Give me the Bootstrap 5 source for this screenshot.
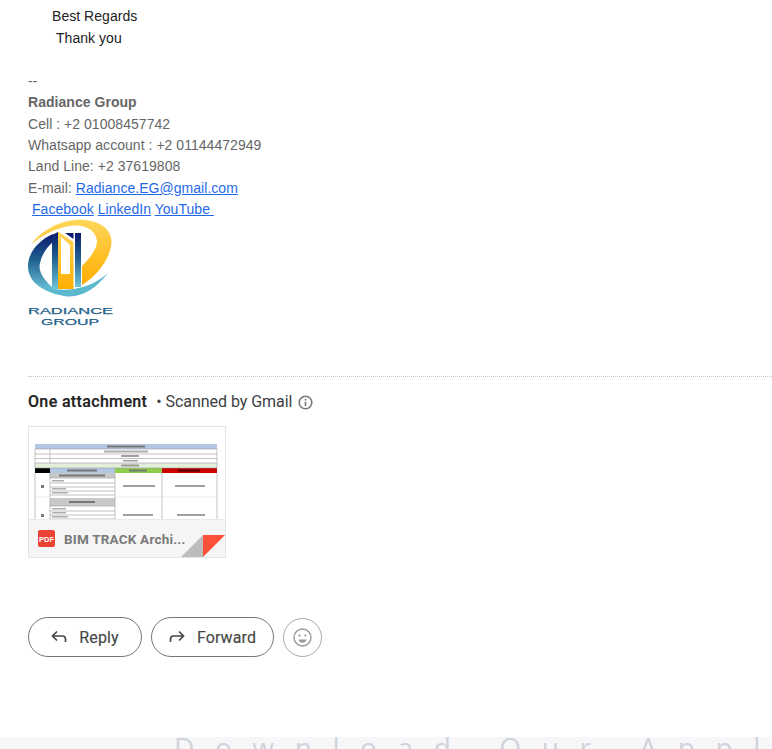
<!DOCTYPE html>
<html lang="en">
<head>
    <meta charset="UTF-8">
    <meta name="viewport" content="width=device-width, initial-scale=1.0">
    <title>Message</title>
    <link rel="stylesheet" href="https://cdn.jsdelivr.net/npm/bootstrap@5.3.0/dist/css/bootstrap.min.css">
    <style>
        html, body { height: 749px; overflow: hidden; background: #fff; }
        .mail-wrap { padding: 6.500px 0 0 28px; }
        .mail-body { font: 14px/21.4px "Liberation Sans", Arial, sans-serif; color: #222; letter-spacing: .04px; }
        .greet-a { padding-left: 24px; margin-top: -1px; margin-bottom: 1px; }
        .greet-b { padding-left: 28px; }
        .sig { color: #666; margin-top: 21.4px; }
        .sig a { color: #1f6ae8; }
        .sig-links { padding-left: 4px; }
        .logo-svg { display: block; width: 86px; height: 110px; margin-top: -1.500px; margin-bottom: -2px; }
        .att-rule { border-top: 1px dotted #c4c4c4; margin-top: 49px; }
        .att-head { font: 16px/20px Roboto, sans-serif; color: #222; margin-top: 15px; height: 20px; }
        .att-head b { font-weight: 500; letter-spacing: .35px; -webkit-text-stroke: .2px #222; }
        .att-scan { color: #3c4043; margin-left: 9px; margin-right: 6px; letter-spacing: -.05px; }
        .att-tile { width: 198px; height: 132px; border: 1px solid #e4e4e4; margin-top: 14px; position: relative; overflow: hidden; background: #fff; }
        .att-tile svg.thumb { display: block; width: 196px; height: 130px; filter: blur(.45px); }
        .att-foot { position: absolute; left: 0; right: 0; bottom: 0; height: 38px; background: #f5f5f5; border-top: 1px solid #e8e8e8; padding-left: 9px; gap: 9px; }
        .att-name { font: 700 13.5px Roboto, sans-serif; color: #7a7a7a; letter-spacing: .2px; white-space: nowrap; }
        .pdf-ico { width: 17px; height: 17px; flex: none; }
        .att-fold { position: absolute; right: 0; bottom: 0; width: 44px; height: 22px; }
        .act-row { margin-top: 59px; gap: 9px; }
        .act-btn { height: 40px; border: 1px solid #747775; border-radius: 20px; background: #fff; font: 400 16px Roboto, sans-serif; color: #444746; letter-spacing: .1px; padding: 0 2px 0 0; gap: 10px; -webkit-text-stroke: .15px #444746; }
        .act-reply { width: 114px; }
        .act-fwd { width: 123px; }
        .act-emoji { width: 39px; height: 39px; border-color: #aaa; border-radius: 50%; padding: 0; }
        .dl-band { position: absolute; left: 0; right: 0; top: 737px; height: 12px; background: #f7f7f9; overflow: hidden; }
        .dl-text { position: absolute; top: -8px; left: 174px; white-space: nowrap; font: 28px/36px "Open Sans", sans-serif; letter-spacing: 20.600px; color: #cfd3db; }
    </style>
</head>
<body>
    <div class="mail-wrap">
        <div class="mail-body">
            <div class="greet-a">Best Regards</div>
            <div class="greet-b">Thank you</div>
            <div class="sig">
                <div>--</div>
                <div class="fw-bold">Radiance Group</div>
                <div>Cell : +2 01008457742</div>
                <div>Whatsapp account : +2 01144472949</div>
                <div>Land Line: +2 37619808</div>
                <div>E-mail: <a href="#">Radiance.EG@gmail.com</a></div>
                <div class="sig-links"><a href="#">Facebook</a> <a href="#">LinkedIn</a> <a href="#">YouTube&nbsp;</a></div>
            </div>
        </div>

        <svg class="logo-svg" viewBox="0 0 86 110">
            <defs>
                <linearGradient id="gBlue" x1="0" y1="0" x2="0" y2="1">
                    <stop offset="0" stop-color="#0b1a6e"/>
                    <stop offset=".45" stop-color="#1f5f90"/>
                    <stop offset="1" stop-color="#6ec4d8"/>
                </linearGradient>
                <linearGradient id="gGold" x1="0" y1="0" x2="0" y2="1">
                    <stop offset="0" stop-color="#ffd65a"/>
                    <stop offset="1" stop-color="#ffae00"/>
                </linearGradient>
            </defs>
            <path d="M3.500 25C10 15 28 2 49 .7C70 0 83 9 83.500 22C84 36 71 56 54 66L54 47C62 39 69 30 69 22C68 11 57 6 47 6.500C33 7 17 14 3.500 25Z" fill="url(#gGold)"/>
            <path d="M25 15C9 22 0 35 0 47C0 60 10 70 24 72L24 68C15 60 10 52 12 44C14 35 19 28 25 23Z" fill="url(#gBlue)"/>
            <path d="M6 62C12 70 24 75 36 77C52 80 68 70 80 54C70 63 58 68 46 70C32 72 17 70 6 62Z" fill="#5cb9cd"/>
            <path d="M24 16L30 13L30 70L24 70Z" fill="url(#gBlue)"/>
            <path d="M30 12.500L45.500 23L45.500 70L30 70Z" fill="url(#gGold)"/>
            <path d="M33 18L42 26V55H33Z" fill="#fff"/>
            <path d="M37 14H45.500V20Z" fill="#0b1a6e"/>
            <path d="M47 14H53V68H47Z" fill="url(#gBlue)"/>
            <text x="0" y="95" textLength="85" lengthAdjust="spacingAndGlyphs" font-family="Liberation Sans, sans-serif" font-size="9.500" stroke="#1f5f8b" stroke-width=".25" fill="#1f5f8b">RADIANCE</text>
            <text x="13" y="106" textLength="58" lengthAdjust="spacingAndGlyphs" font-family="Liberation Sans, sans-serif" font-size="9.500" stroke="#1f5f8b" stroke-width=".25" fill="#1f5f8b">GROUP</text>
        </svg>

        <div class="att-rule"></div>
        <div class="att-head d-flex align-items-center">
            <b>One attachment</b>
            <span class="att-scan">• Scanned by Gmail</span>
            <svg width="15" height="15" viewBox="0 0 15 15" fill="none" stroke="#777" stroke-width="1.600">
                <circle cx="7.500" cy="7.500" r="6.300"/>
                <path d="M7.500 6.800V11M7.500 4V5.400"/>
            </svg>
        </div>

        <div class="att-tile">
            <svg class="thumb" viewBox="0 0 196 130">
                <rect x="6" y="17" width="182" height="5" fill="#b3c6e4"/>
                <rect x="6" y="36" width="182" height="5" fill="#e3efd9"/>
                <rect x="6" y="41" width="15" height="5" fill="#000"/>
                <rect x="21" y="41" width="65" height="5" fill="#b3c6e4"/>
                <rect x="86" y="41" width="47" height="5" fill="#8fce4a"/>
                <rect x="133" y="41" width="55" height="5" fill="#c80000"/>
                <rect x="21" y="46" width="65" height="5" fill="#c9c9c9"/>
                <rect x="21" y="71" width="65" height="8" fill="#c9c9c9"/>
                <g fill="none" stroke="#9a9a9a" stroke-width=".6">
                    <rect x="6" y="22" width="182" height="19"/>
                    <path d="M21 22V36M6 27H188M6 31.500H188M6 36H188"/>
                    <path d="M6 46V102M21 46V102M86 46V102M133 46V102M188 46V102"/>
                    <path d="M21 51H86M21 56H86M21 60H86M21 64H86M21 68H86M21 79H86M21 84H86M21 88H86M21 92H86M21 96H86"/>
                </g>
                <path d="M6 70H21M86 70H188" stroke="#dedede" stroke-width=".6"/>
                <g fill="#777">
                    <rect x="78" y="18.500" width="38" height="2"/>
                    <rect x="75" y="23.500" width="44" height="2" opacity=".6"/>
                    <rect x="92" y="28" width="18" height="2" opacity=".7"/>
                    <rect x="94" y="33" width="15" height="1.500" opacity=".7"/>
                    <rect x="92" y="37.500" width="18" height="2" opacity=".7"/>
                    <rect x="38" y="42.500" width="30" height="2"/>
                    <rect x="100" y="42.500" width="18" height="2"/>
                    <rect x="149" y="42.500" width="22" height="2" fill="#500"/>
                    <rect x="30" y="47.500" width="46" height="2"/>
                    <rect x="40" y="74" width="26" height="2"/>
                    <rect x="12" y="58" width="3" height="3"/>
                    <rect x="12" y="87" width="3" height="3"/>
                    <rect x="94" y="58" width="32" height="2" opacity=".7"/>
                    <rect x="146" y="58" width="30" height="2" opacity=".7"/>
                    <rect x="94" y="87" width="30" height="2" opacity=".7"/>
                    <rect x="148" y="87" width="28" height="2" opacity=".7"/>
                    <rect x="23" y="53" width="12" height="1.500" opacity=".6"/>
                    <rect x="23" y="61" width="14" height="1.500" opacity=".6"/>
                    <rect x="23" y="65" width="16" height="1.500" opacity=".6"/>
                    <rect x="23" y="81" width="14" height="1.500" opacity=".6"/>
                    <rect x="23" y="85" width="14" height="1.500" opacity=".6"/>
                    <rect x="23" y="89" width="16" height="1.500" opacity=".6"/>
                    <rect x="23" y="93" width="18" height="1.500" opacity=".6"/>
                </g>
            </svg>
            <div class="att-foot d-flex align-items-center">
                <svg class="pdf-ico" viewBox="0 0 17 17">
                    <rect width="17" height="17" rx="2" fill="#ea4335"/>
                    <text x="8.500" y="11.500" text-anchor="middle" font-family="Liberation Sans, sans-serif" font-weight="700" font-size="7.500" fill="#fff">PDF</text>
                </svg>
                <span class="att-name">BIM TRACK Archi...</span>
            </div>
            <svg class="att-fold" viewBox="0 0 44 22">
                <path d="M0 22L22 0L22 22Z" fill="#bdbdbd"/>
                <path d="M22 0H44L22 22Z" fill="#fb5138"/>
            </svg>
        </div>

        <div class="act-row d-flex align-items-center">
            <button class="btn act-btn act-reply d-flex align-items-center justify-content-center">
                <svg width="20" height="20" viewBox="0 0 20 20" fill="none" stroke="#444746" stroke-width="1.700">
                    <path d="M8 4.500L3.500 9L8 13.500M4 9H13.500C15.500 9 16.500 10.500 16.500 12V15"/>
                </svg>
                <span>Reply</span>
            </button>
            <button class="btn act-btn act-fwd d-flex align-items-center justify-content-center">
                <svg width="20" height="20" viewBox="0 0 20 20" fill="none" stroke="#444746" stroke-width="1.700">
                    <path d="M12 4.500L16.500 9L12 13.500M16 9H6.500C4.500 9 3.500 10.500 3.500 12V15"/>
                </svg>
                <span>Forward</span>
            </button>
            <button class="btn act-btn act-emoji d-flex align-items-center justify-content-center">
                <svg width="21" height="21" viewBox="0 0 21 21" fill="none" stroke="#999" stroke-width="1.400">
                    <circle cx="10.500" cy="10.500" r="8.500"/>
                    <circle cx="7.500" cy="8.500" r="1.100" fill="#999" stroke="none"/>
                    <circle cx="13.500" cy="8.500" r="1.100" fill="#999" stroke="none"/>
                    <path d="M6.500 12.500H14.500C14 14.800 12.300 15.800 10.500 15.800C8.700 15.800 7 14.800 6.500 12.500Z" fill="#999" stroke="none"/>
                </svg>
            </button>
        </div>
    </div>

    <div class="dl-band"><div class="dl-text">Download Our Appl</div></div>
</body>
</html>
